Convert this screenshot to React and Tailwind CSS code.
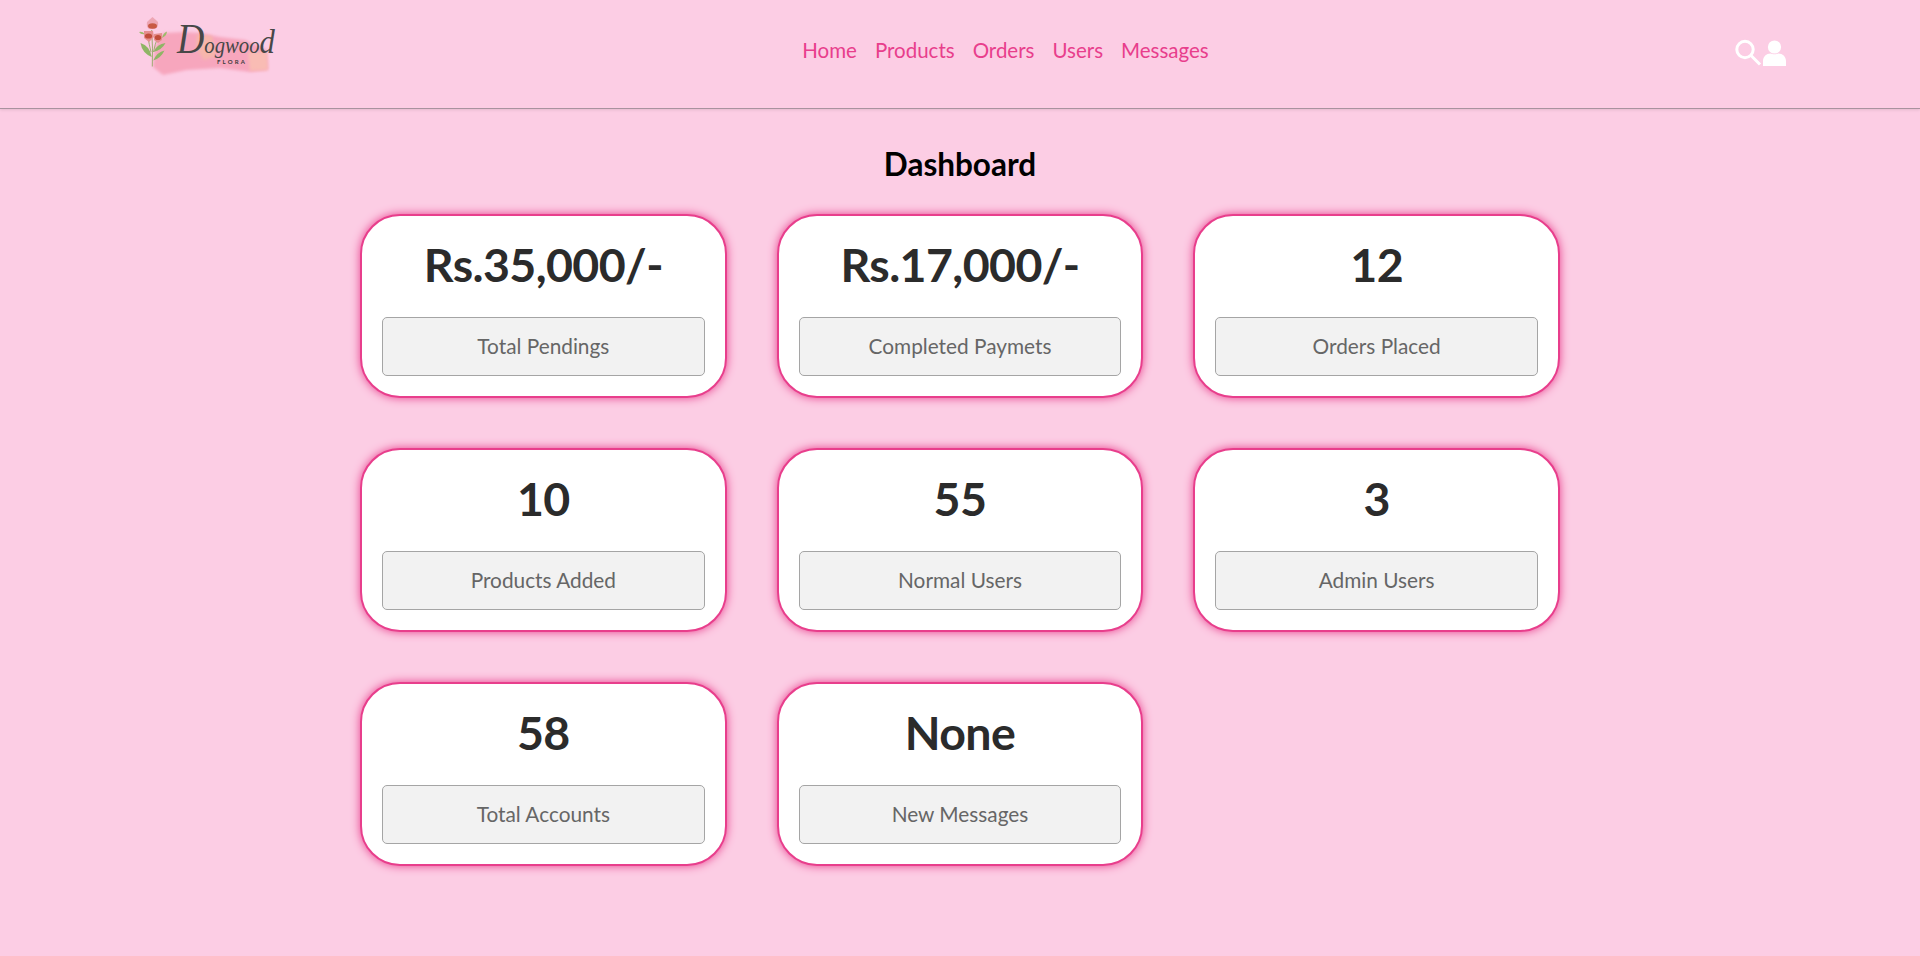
const stats = [
  ["Rs.35,000/-", "Total Pendings"],
  ["Rs.17,000/-", "Completed Paymets"],
  ["12", "Orders Placed"],
  ["10", "Products Added"],
  ["55", "Normal Users"],
  ["3", "Admin Users"],
  ["58", "Total Accounts"],
  ["None", "New Messages"],
];
const links = ["Home", "Products", "Orders", "Users", "Messages"];

function Logo() {
  return (
    <svg width="157" height="108" viewBox="0 0 157 108" className="block shrink-0 overflow-visible">
      <defs>
        <filter id="soft"><feGaussianBlur stdDeviation="1.4" /></filter>
        <filter id="softer"><feGaussianBlur stdDeviation="0.5" /></filter>
      </defs>
      <path d="M43 33 L63 32 L80 33 L100 37 L125 40 L147 50 L148 70 L130 72 L100 68 L67 70 L43 75 L33 67 L35 47 Z" fill="#f7a6bd" filter="url(#soft)" />
      <path d="M77 34 L92 36 L96 56 L84 60 L76 48 Z" fill="#f7b6ab" filter="url(#soft)" />
      <path d="M128 52 L147 52 L148 70 L130 71 Z" fill="#f9bcb4" filter="url(#soft)" />
      <g filter="url(#softer)">
        <path d="M32.3 66.5 Q33 48 31.7 30 M31 52 Q29 44 28 37 M33.5 52 Q35 44 37.5 38" stroke="#94a865" strokeWidth="0.9" fill="none" />
        <path d="M31.7 57 Q22 53 20.5 43 Q30 46 31.7 57 Z" fill="#8fb565" />
        <path d="M33.3 52 Q37 44 45.5 43 Q42 50 33.3 52 Z" fill="#8fb565" />
        <path d="M33.3 60.5 Q37 52 44.5 50.5 Q41 58 33.3 60.5 Z" fill="#8fb565" />
        <path d="M19 32 Q22 31 25 34 Q21 35 19 32 Z M42 38 Q43 33 47 31.5 Q46.5 36 42 38 Z" fill="#9dbb6a" />
        <path d="M32.5 17 Q36 20 38 22 Q39 27 35 29 L29 29 Q26 27 27 22 Q29 20 32.5 17 Z" fill="#eda6b4" />
        <ellipse cx="32.5" cy="26" rx="4.5" ry="2.8" fill="#c85a45" />
        <path d="M24 31 L33 31 L34 37 L29 42 L24 38 Z" fill="#e58f8f" />
        <ellipse cx="28.5" cy="36" rx="3.6" ry="2.6" fill="#c14e3a" />
        <path d="M34 34 L42 33 L42 40 L38 43 L34 40 Z" fill="#e58f8f" />
        <ellipse cx="38" cy="37.5" rx="3.2" ry="2.6" fill="#c14e3a" />
      </g>
      <text transform="translate(57,53) scale(0.9,1)" fontFamily="'Liberation Serif', serif" fontStyle="italic" fill="#474747">
        <tspan fontSize="42">D</tspan>
        <tspan fontSize="23">ogwoo</tspan>
        <tspan fontSize="34">d</tspan>
      </text>
      <text x="97" y="63.5" fontFamily="Lato, sans-serif" fontWeight="700" fontSize="6" letterSpacing="2.2" fill="#3a3a3a">FLORA</text>
    </svg>
  );
}

function SearchUser() {
  return (
    <div className="flex items-center gap-px">
      <svg width="28" height="28" viewBox="0 0 28 28" fill="none" stroke="#fff" className="block">
        <circle cx="11" cy="10.5" r="8.2" strokeWidth="3" />
        <path d="M17 16.5 L26 25.5" strokeWidth="3" />
      </svg>
      <svg width="23" height="27" viewBox="0 0 23 27" fill="#fff" className="block">
        <circle cx="11.5" cy="7" r="6.6" />
        <path d="M0 26 V21 C0 16.5 3.5 13.5 7.5 13.5 C9 14.6 14 14.6 15.5 13.5 C19.5 13.5 23 16.5 23 21 V26 Z" />
      </svg>
    </div>
  );
}

export default function App() {
  return (
    <div className="min-h-[956px] bg-[#fccde4] font-[Lato,sans-serif]">
      <header className="flex h-[109px] items-start justify-between border-b border-[#a8929e] pl-[120px] pr-[134px] shadow-[0_1px_3px_rgba(0,0,0,0.1)]">
        <Logo />
        <nav className="mt-[36px] flex gap-[18px] text-[20.5px] leading-[28px] text-[#e83e8c]">
          {links.map((l) => (
            <a key={l}>{l}</a>
          ))}
        </nav>
        <div className="mt-[39px]"><SearchUser /></div>
      </header>
      <main className="mx-auto w-[1200px]">
        <h1 className="mt-[34px] mb-[29px] text-center text-[31.5px] font-bold leading-[42px] text-black">Dashboard</h1>
        <div className="grid grid-cols-3 gap-x-[50px] gap-y-[50px]">
          {stats.map(([v, l]) => (
            <div
              key={l}
              className="flex h-[184px] flex-col rounded-[40px] border-2 border-[#e83e8c] bg-white px-[20px] pt-[20px] shadow-[0_0_10px_#e83e8c]"
            >
              <div className="h-[61px] text-center text-[46.5px] font-bold leading-[56px] tracking-[-0.6px] text-[#2b2b2b]">{v}</div>
              <div className="mt-[20px] flex h-[59px] items-center justify-center rounded-[5px] border border-[#a5a5a5] bg-[#f2f2f2] pb-[2px] text-[20.8px] text-[#666]">
                {l}
              </div>
            </div>
          ))}
        </div>
      </main>
    </div>
  );
}
